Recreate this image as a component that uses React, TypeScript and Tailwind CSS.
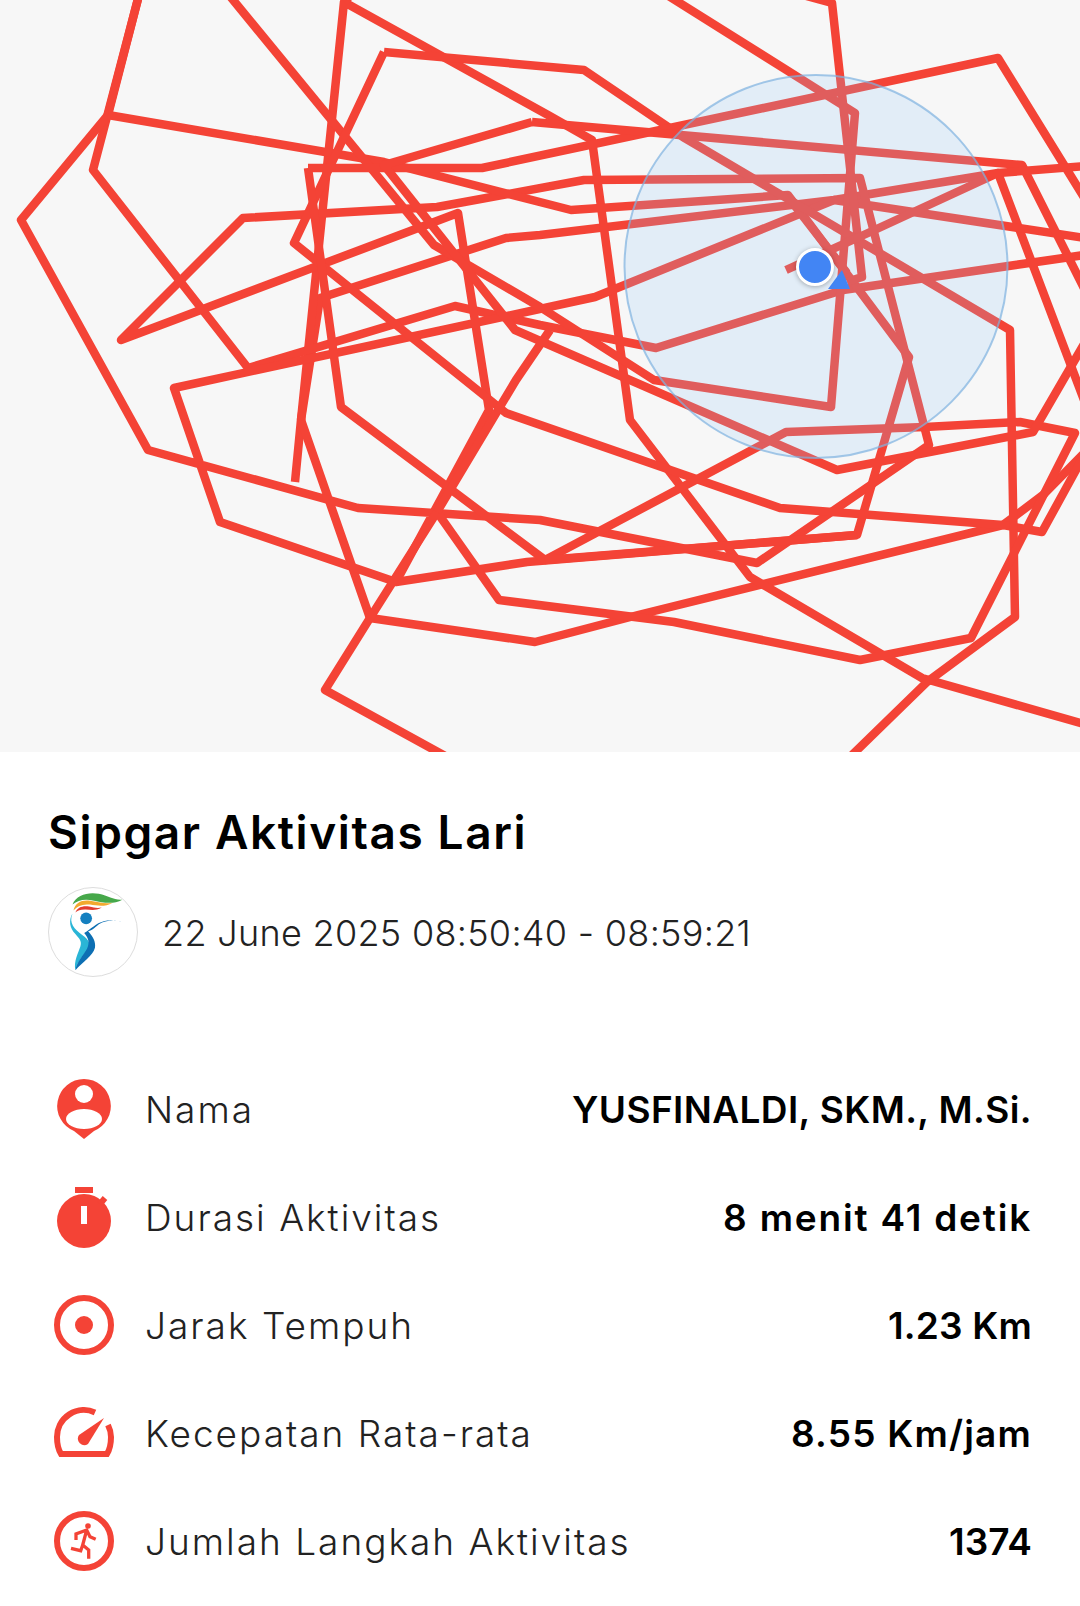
const routes = [
  "295,482 301,420 320,298 506,238 540,235 834,200 998,173 1098,437",
  "301,420 370,618 535,642 638,615 1003,525 1043,495 1098,439",
  "301,420 344,2 548,115 592,140 630,420 750,577 922,678 1098,728",
  "344,2 356,-10",
  "139,-5 93,170 248,368 455,306 540,325 656,348 843,290 1098,253",
  "139,-5 108,115 21,220 148,450 358,508 540,520 757,563 929,445 860,178 584,180 437,207 243,218 121,340 458,213 489,410 396,582 220,522 174,388 595,297 834,200 1098,240",
  "108,115 384,162 571,210 788,195 909,357 857,535 527,562 396,582",
  "229,-5 434,245 540,307 654,380 831,407 855,113 667,-5",
  "803,-5 832,3 862,277 847,282",
  "788,197 847,273",
  "384,52 294,243 506,413 780,508 1003,525 1042,532 1098,430",
  "384,52 584,70 683,137 1010,330 1015,617 927,682 850,757",
  "308,168 341,407 545,560 786,432 925,427 1020,422 1075,433 971,638 860,660 674,622 499,600 437,512 370,618 325,690 447,757",
  "308,168 482,168 998,58 1098,220",
  "437,512 516,380 550,330",
  "545,560 857,535",
  "532,122 384,165 515,330 837,470 1033,432 1098,320",
  "532,122 1022,165 1098,316",
  "786,270 868,233 998,173 1098,165",
];

const rows = [
  { label: "Nama", value: "YUSFINALDI, SKM., M.Si.", icon: "person", spacing: "tracking-[0.4px]" },
  { label: "Durasi Aktivitas", value: "8 menit 41 detik", icon: "timer", spacing: "tracking-[1.8px]" },
  { label: "Jarak Tempuh", value: "1.23 Km", icon: "target", spacing: "tracking-[0.2px]" },
  { label: "Kecepatan Rata-rata", value: "8.55 Km/jam", icon: "gauge", spacing: "tracking-[1.2px]" },
  { label: "Jumlah Langkah Aktivitas", value: "1374", icon: "run", spacing: "tracking-normal" },
];

function RowIcon({ name }: { name: string }) {
  return (
    <svg viewBox="0 0 72 72" className="h-[72px] w-[72px] shrink-0">
      {name === "person" && (
        <g fill="#f44336">
          <path d="M36 4a27 27 0 0 1 10 52l-10 8-10-8A27 27 0 0 1 36 4z" />
          <circle cx="36" cy="19" r="9" fill="#fff" />
          <ellipse cx="36" cy="44" rx="18" ry="10" fill="#fff" />
        </g>
      )}
      {name === "timer" && (
        <g fill="#f44336">
          <rect x="27" y="4" width="18" height="6" />
          <circle cx="36" cy="38" r="27" />
          <rect x="33" y="23" width="6" height="18" fill="#fff" />
          <path d="M52 21l5-6" stroke="#f44336" strokeWidth="6" />
        </g>
      )}
      {name === "target" && (
        <g>
          <circle cx="36" cy="34" r="27" fill="none" stroke="#f44336" strokeWidth="6" />
          <circle cx="36" cy="34" r="9" fill="#f44336" />
        </g>
      )}
      {name === "gauge" && (
        <g>
          <path
            d="M47 13.400A27 27 0 0 0 9 38C9 44 10 50 13 55H59C62 50 63 44 63 38C63 33 62 30 60 26"
            fill="none"
            stroke="#f44336"
            strokeWidth="6"
          />
          <path d="M56 19L40 45A6.500 6.500 0 0 1 31 36z" fill="#f44336" />
        </g>
      )}
      {name === "run" && (
        <g>
          <circle cx="36" cy="34" r="27" fill="none" stroke="#f44336" strokeWidth="6" />
          <circle cx="40" cy="19" r="2.800" fill="#f44336" />
          <path
            d="M28 33V27L38.700 23L42 29.700L47.700 32.300M38.700 23L34.700 38L40.700 43V51.700M34.700 38L32.700 43.700L23 41.300"
            fill="none"
            stroke="#f44336"
            strokeWidth="3.300"
          />
        </g>
      )}
    </svg>
  );
}

function Logo() {
  return (
    <div className="h-[90px] w-[90px] shrink-0 rounded-full border border-[#dddddd] bg-white">
      <svg viewBox="0 0 90 90" className="h-full w-full">
        <path d="M24 17C28 7 40 4 51 6C61 8 67 13 75 12C66 17 55 15 46 13C37 11 30 12 24 17z" fill="#46a84a" />
        <path d="M25 23C27 15 33 12 42 13C50 14 57 17 65 15C57 20 49 18 42 17C35 16 29 18 25 23z" fill="#f2a92e" />
        <path d="M27 25C29 20 34 18 41 19C46 20 49 21 54 20C47 24 42 22 37 22C32 22 29 23 27 25z" fill="#e23b2e" />
        <circle cx="38" cy="31" r="6" fill="#1580c0" />
        <path d="M24 26C20 36 26 42 34 48C41 53 43 57 40 63C36 68 29 75 27 84C25 75 30 66 32 60C34 54 31 52 27 47C21 41 20 33 24 26z" fill="#2ab5d6" />
        <path d="M75 35C67 32 58 33 51 37C46 41 43 44 40 44C45 50 48 55 47 61C45 69 34 76 27 84C28 76 36 68 39 62C42 55 40 51 36 46C43 42 48 36 56 34C62 32 69 33 75 35z" fill="#0d6fb3" />
      </svg>
    </div>
  );
}

export default function App() {
  return (
    <div className="min-h-[1606px] w-[1080px] overflow-hidden bg-white font-['Inter','Liberation_Sans',sans-serif] text-black">
      <div className="relative h-[752px] overflow-hidden bg-[#f7f7f7]">
        <svg viewBox="0 0 1080 752" className="absolute inset-0 h-full w-full">
          {routes.map((points) => (
            <polyline
              key={points}
              points={points}
              fill="none"
              stroke="#f44336"
              strokeWidth="8.500"
              strokeLinejoin="round"
            />
          ))}
          <circle
            cx="816"
            cy="266.500"
            r="191.500"
            fill="#90caf9"
            fillOpacity="0.2"
            stroke="#7fb2e0"
            strokeOpacity="0.7"
            strokeWidth="2"
          />
          <polygon points="842,270 828,289 850,289" fill="#4285f4" />
        </svg>
        <div className="absolute left-[796px] top-[248px] h-[38px] w-[38px] rounded-full border-[3px] border-white bg-[#4285f4] shadow-[0_1px_5px_rgba(0,0,0,0.3)]" />
      </div>

      <div className="px-12 pt-[52px]">
        <h1 className="text-[46px] font-semibold leading-[56px] tracking-[1.6px]">Sipgar Aktivitas Lari</h1>
        <div className="mt-[27px] flex items-center gap-6">
          <Logo />
          <span className="mt-[2px] text-[36px] font-light tracking-[0.3px] text-[#222222]">22 June 2025 08:50:40 - 08:59:21</span>
        </div>
        <div className="mt-[98px] flex flex-col gap-9">
          {rows.map((row) => (
            <div key={row.label} className="flex h-[72px] items-center justify-between">
              <div className="flex items-center gap-[25px]">
                <RowIcon name={row.icon} />
                <span className="mb-[2px] text-[37px] font-light tracking-[2px] text-[#222222]">{row.label}</span>
              </div>
              <span className={`mb-[2px] text-[37px] font-semibold ${row.spacing}`}>{row.value}</span>
            </div>
          ))}
        </div>
      </div>
    </div>
  );
}
